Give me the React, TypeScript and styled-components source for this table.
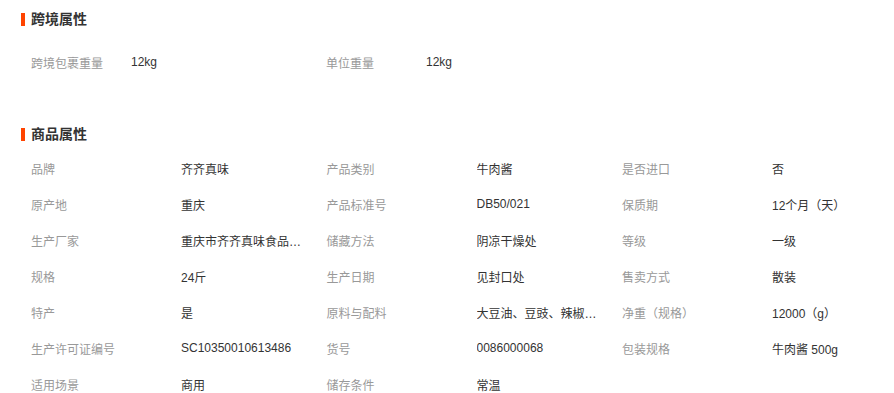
import React from "react";
import styled, { createGlobalStyle } from "styled-components";

const Global = createGlobalStyle`
  html, body { margin: 0; padding: 0; background: #fff; }
  body { font-family: "Liberation Sans", "Noto Sans CJK SC", sans-serif; color: #333; }
`;

const Page = styled.div`
  width: 894px;
  padding-top: 9px;
`;

const Section = styled.section<{ $mt?: number }>`
  margin-top: ${(p) => p.$mt ?? 0}px;
`;

const Header = styled.h3<{ $mb: number }>`
  display: flex;
  align-items: center;
  gap: 6px;
  margin: 0 0 ${(p) => p.$mb}px 21px;
  height: 20px;
  font-size: 14px;
  font-weight: bold;
  color: #333;
  line-height: 20px;
  &::before {
    content: "";
    width: 4px;
    height: 13px;
    background: #ff4400;
  }
`;

const Grid = styled.div<{ $cols: number; $colW: number }>`
  display: grid;
  grid-template-columns: repeat(${(p) => p.$cols}, ${(p) => p.$colW}px);
  padding-left: 31px;
`;

const Item = styled.div<{ $labelW: number }>`
  display: grid;
  grid-template-columns: ${(p) => p.$labelW}px auto;
  height: 36px;
  align-items: center;
  font-size: 12px;
`;

const Label = styled.span`
  color: #999;
  white-space: nowrap;
`;

const Value = styled.span`
  color: #333;
  max-width: 121px;
  white-space: nowrap;
  overflow: hidden;
  text-overflow: ellipsis;
`;

const cross = [
  ["跨境包裹重量", "12kg"],
  ["单位重量", "12kg"],
];

const attrs = [
  ["品牌", "齐齐真味"],
  ["产品类别", "牛肉酱"],
  ["是否进口", "否"],
  ["原产地", "重庆"],
  ["产品标准号", "DB50/021"],
  ["保质期", "12个月（天）"],
  ["生产厂家", "重庆市齐齐真味食品有限公司"],
  ["储藏方法", "阴凉干燥处"],
  ["等级", "一级"],
  ["规格", "24斤"],
  ["生产日期", "见封口处"],
  ["售卖方式", "散装"],
  ["特产", "是"],
  ["原料与配料", "大豆油、豆豉、辣椒、牛肉"],
  ["净重（规格）", "12000（g）"],
  ["生产许可证编号", "SC10350010613486"],
  ["货号", "0086000068"],
  ["包装规格", "牛肉酱 500g"],
  ["适用场景", "商用"],
  ["储存条件", "常温"],
];

export default function App() {
  return (
    <>
      <Global />
      <Page>
        <Section>
          <Header $mb={15}>跨境属性</Header>
          <Grid $cols={2} $colW={295}>
            {cross.map(([l, v]) => (
              <Item key={l} $labelW={100}>
                <Label>{l}</Label>
                <Value>{v}</Value>
              </Item>
            ))}
          </Grid>
        </Section>
        <Section $mt={44}>
          <Header $mb={6}>商品属性</Header>
          <Grid $cols={3} $colW={295.5}>
            {attrs.map(([l, v]) => (
              <Item key={l} $labelW={150}>
                <Label>{l}</Label>
                <Value>{v}</Value>
              </Item>
            ))}
          </Grid>
        </Section>
      </Page>
    </>
  );
}
